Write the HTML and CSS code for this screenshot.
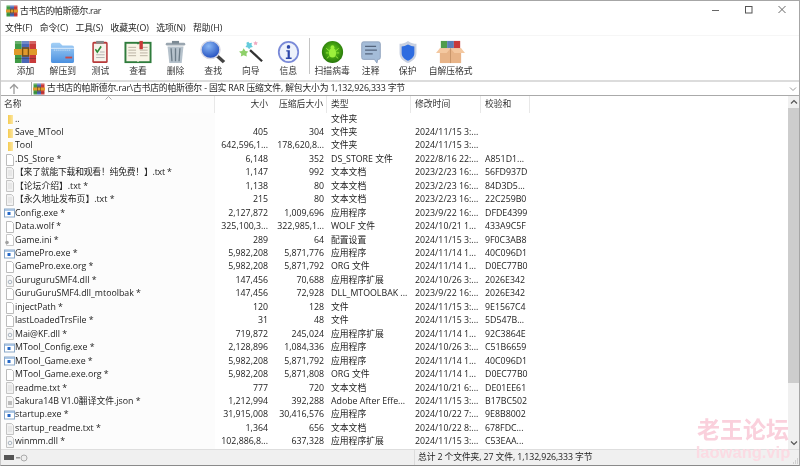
FILE: index.html
```html
<!DOCTYPE html>
<html lang="zh">
<head>
<meta charset="utf-8">
<title>古书店的帕斯德尔.rar</title>
<link rel="stylesheet" href="styles.css">
</head>
<body>
<svg class="defs" width="0" height="0" aria-hidden="true">
  <defs>
    <linearGradient id="fold" x1="0" x2="1" y1="0" y2="0"><stop offset="0" stop-color="#f5cb50"/><stop offset="1" stop-color="#fce6a0"/></linearGradient>
    <linearGradient id="blueg" x1="0" x2="0" y1="0" y2="1"><stop offset="0" stop-color="#a4d0f6"/><stop offset="1" stop-color="#4a90e0"/></linearGradient>
    <radialGradient id="lens" cx=".4" cy=".3" r=".8"><stop offset="0" stop-color="#8ab8f5"/><stop offset="1" stop-color="#1440b8"/></radialGradient>
    <radialGradient id="bug" cx=".5" cy=".45" r=".6"><stop offset="0" stop-color="#6ad81c"/><stop offset="1" stop-color="#1f6c08"/></radialGradient>
    <symbol id="rar" viewBox="0 0 24 24" preserveAspectRatio="none">
      <rect x="1" y="1" width="7" height="22" fill="#3f9a45"/><rect x="8" y="1" width="8" height="22" fill="#4a68b8"/><rect x="16" y="1" width="7" height="22" fill="#c83a3a"/>
      <rect x="1" y="1" width="22" height="3" fill="#fff" opacity=".22"/>
      <rect x="0" y="9" width="24" height="6" fill="#e09a2c"/><rect x="9" y="8" width="6" height="8" fill="none" stroke="#7a5210" stroke-width="1.4"/>
      <rect x="1" y="18" width="22" height="1" fill="#222" opacity=".3"/>
    </symbol>
    <symbol id="i-fold" viewBox="0 0 12 12"><rect x="5" y="2" width="5" height="9" fill="url(#fold)"/></symbol>
    <symbol id="i-doc" viewBox="0 0 12 12"><path d="M3.500.5h5l2 2v9h-7z" fill="#fff" stroke="#bcbcbc"/></symbol>
    <symbol id="i-txt" viewBox="0 0 12 12"><path d="M3.500.5h5l2 2v9h-7z" fill="#f2f2f2" stroke="#c4c4c4"/><path d="M5 4h4M5 6h4M5 8h4" stroke="#dcdcdc"/></symbol>
    <symbol id="i-exe" viewBox="0 0 12 12"><rect x="1.500" y="2" width="10" height="8" fill="#fff" stroke="#8aa8c8"/><rect x="2" y="2.500" width="9" height="1.200" fill="#88b0dc"/><rect x="4.500" y="5" width="3" height="3" fill="#2468c8"/></symbol>
    <symbol id="i-dll" viewBox="0 0 12 12"><path d="M3.500.5h5l2 2v9h-7z" fill="#f6f6f6" stroke="#c4c4c4"/><circle cx="7" cy="7" r="1.800" fill="none" stroke="#a8b4c0"/></symbol>
    <symbol id="i-ini" viewBox="0 0 12 12"><path d="M3.500.5h5l2 2v9h-7z" fill="#fff" stroke="#c8c8c8"/><circle cx="4" cy="8.500" r="1.800" fill="#a0a0a0"/></symbol>
    <symbol id="i-json" viewBox="0 0 12 12"><path d="M3.500.5h5l2 2v9h-7z" fill="#f6f6f6" stroke="#c8c8c8"/><path d="M5 6h4M5 8h4" stroke="#808080"/></symbol>
  </defs>
</svg>
<div class="window">
  <header class="titlebar">
    <svg class="title-icon"><use href="#rar"/></svg>
    <span class="title-text">古书店的帕斯德尔.rar</span>
    <div class="winbtns">
      <svg width="12" height="12" viewBox="0 0 12 12"><path d="M0 5.500h7" stroke="#666"/></svg>
      <svg width="12" height="12" viewBox="0 0 12 12"><rect x=".5" y="1.500" width="6.500" height="6.500" fill="none" stroke="#555"/></svg>
      <svg width="12" height="12" viewBox="0 0 12 12"><path d="M.5 1l7 7M7.500 1l-7 7" stroke="#666" fill="none"/></svg>
    </div>
  </header>
  <nav class="menubar">
    <span>文件(F)</span><span>命令(C)</span><span>工具(S)</span><span>收藏夹(O)</span><span>选项(N)</span><span>帮助(H)</span>
  </nav>
  <div class="toolbar">
    <div class="tool t1"><svg class="ticon"><use href="#rar"/></svg><span>添加</span></div>
    <div class="tool t2"><svg class="ticon" viewBox="0 0 26 26" preserveAspectRatio="none"><path d="M1 5a2 2 0 0 1 2-2h7l3 3h10a2 2 0 0 1 2 2v15a2 2 0 0 1-2 2H3a2 2 0 0 1-2-2z" fill="url(#blueg)"/><path d="M1 9h24" stroke="#e2f0fc"/><path d="M4 11h18" stroke="#dcebf8" stroke-dasharray="1 1"/><rect x="16" y="18" width="7" height="2" fill="#c84a4a"/></svg><span>解压到</span></div>
    <div class="tool t3"><svg class="ticon" viewBox="0 0 26 26" preserveAspectRatio="none"><rect x="3" y="2" width="20" height="23" rx="2" fill="#b83a3a"/><rect x="5" y="4" width="16" height="19" fill="#f6f2ea"/><rect x="8" y="1" width="10" height="3" fill="#888"/><path d="M7 10l2.500 3 5-6" stroke="#2c8a38" stroke-width="2" fill="none"/><path d="M13 13h6M8 16h11M8 19h11" stroke="#aaa"/></svg><span>测试</span></div>
    <div class="tool t4"><svg class="ticon" viewBox="0 0 29 26" preserveAspectRatio="none"><rect x=".5" y="2" width="28" height="23" fill="#2f7c3c"/><path d="M2.500 4h11l1 1 1-1h11v19h-11l-1 1-1-1h-11z" fill="#f8f4e6"/><path d="M4.500 8h8M4.500 11h8M4.500 14h8M4.500 17h8M16.500 8h8M16.500 11h8M16.500 14h8M16.500 17h8" stroke="#b8b0a0"/><rect x="16" y="1" width="3.500" height="9" fill="#c83a3a"/></svg><span>查看</span></div>
    <div class="tool t5"><svg class="ticon" viewBox="0 0 26 26" preserveAspectRatio="none"><rect x="2" y="3" width="22" height="3" rx="1.500" fill="#9aa6b0"/><rect x="9" y="1" width="8" height="3" fill="#7c8a94"/><path d="M4 7h18l-2 18H6z" fill="#b6c2cc"/><path d="M8 9l1 14M13 9v14M18 9l-1 14" stroke="#6c7c88" stroke-width="1.500"/></svg><span>删除</span></div>
    <div class="tool t6"><svg class="ticon" viewBox="0 0 26 26" preserveAspectRatio="none"><path d="M16 16l8 8" stroke="#444" stroke-width="3.500"/><circle cx="10.500" cy="10.500" r="9.500" fill="url(#lens)" stroke="#d8d8e4" stroke-width="1.500"/></svg><span>查找</span></div>
    <div class="tool t7"><svg class="ticon" viewBox="0 0 26 26" preserveAspectRatio="none"><path d="M12 11l13 12" stroke="#333" stroke-width="2.500"/><path d="M5 9l2 3 3 .5-2 2.500.5 3-3.500-1.500-3 1.500.5-3L0 12.500l3.500-.5z" fill="#8ed06a"/><path d="M10 2l1.500 1.500L14 3l-.5 2.500L15 7.500l-2.500.5L11 10l-1.500-2L7 7.500 8.500 5.500 8 3z" fill="#66ccdc"/><path d="M18 1l.8 1.500 1.700.3-1.200 1.200.3 1.700-1.600-.8-1.600.8.300-1.700-1.200-1.200 1.700-.3z" fill="#f0a8c0"/></svg><span>向导</span></div>
    <div class="tool t8"><svg class="ticon" viewBox="0 0 26 26" preserveAspectRatio="none"><circle cx="13" cy="13" r="11" fill="#eef2fb" stroke="#7a8ad8" stroke-width="2"/><circle cx="13" cy="7.500" r="2" fill="#2c46a8"/><path d="M10.500 11h4v8h2v1.500h-6.500V19h2v-6.500h-1.500z" fill="#2c46a8"/></svg><span>信息</span></div>
    <div class="tsep"></div>
    <div class="tool t9"><svg class="ticon" viewBox="0 0 26 26" preserveAspectRatio="none"><circle cx="13" cy="13" r="12" fill="url(#bug)"/><ellipse cx="13" cy="14" rx="4" ry="5" fill="#9cf03c"/><circle cx="13" cy="8" r="2.200" fill="#9cf03c"/><path d="M6 9l3 2.500M20 9l-3 2.500M5.500 14h3M20.500 14h-3M6.500 20l3-2.500M19.500 20l-3-2.500" stroke="#9cf03c"/></svg><span>扫描病毒</span></div>
    <div class="tool t10"><svg class="ticon" viewBox="0 0 26 26" preserveAspectRatio="none"><path d="M2 4a2 2 0 0 1 2-2h18a2 2 0 0 1 2 2v15a2 2 0 0 1-2 2h-1l-1 4-3-4H4a2 2 0 0 1-2-2z" fill="#a4bcd8" stroke="#8ca0bc"/><path d="M6 7h13M6 11h14M6 15h9" stroke="#54647c" stroke-width="1.300"/></svg><span>注释</span></div>
    <div class="tool t11"><svg class="ticon" viewBox="0 0 26 26" preserveAspectRatio="none"><path d="M13 1c4 2.500 7 3 10 3v10c0 6-5 9-10 11C8 23 3 20 3 14V4c3 0 6-.5 10-3z" fill="#c8d0e0"/><path d="M13 5c3 1.500 5 2 7.500 2v7c0 4.500-3.500 6.500-7.500 8.500C9 20.500 5.500 18.500 5.500 14V7C8 7 10 6.500 13 5z" fill="#2e6ce0"/></svg><span>保护</span></div>
    <div class="tool t12"><svg class="ticon" viewBox="0 0 30 26" preserveAspectRatio="none"><rect x="5" y="1" width="6.500" height="8" fill="#4f9c4a"/><rect x="11.500" y="1" width="7" height="8" fill="#5a80b8"/><rect x="18.500" y="1" width="6.500" height="8" fill="#c83a3a"/><path d="M4 9h22v16H4z" fill="#e8b488"/><path d="M4 9L0 14h11l4-5zM26 9l4 5H19l-4-5z" fill="#f4c8a0"/><path d="M15 9v16" stroke="#c89468"/></svg><span>自解压格式</span></div>
  </div>
  <div class="addressrow">
    <svg class="up" width="12" height="12" viewBox="0 0 12 12"><path d="M6 11V2M2 5.500L6 1.500l4 4" stroke="#9a9a9a" stroke-width="1.300" fill="none"/></svg>
    <div class="address">
      <svg class="addr-icon"><use href="#rar"/></svg>
      <span class="addr-text">古书店的帕斯德尔.rar\古书店的帕斯德尔 - 固实 RAR 压缩文件, 解包大小为 1,132,926,333 字节</span>
      <svg class="chev" width="8" height="6" viewBox="0 0 8 6"><path d="M1 1.500l3 3 3-3" stroke="#9a9a9a" fill="none"/></svg>
    </div>
  </div>
  <div class="listarea">
    <div class="list">
      <div class="row head">
        <div class="c name">名称<svg class="sort" width="7" height="4" viewBox="0 0 7 4"><path d="M.5 3.500l3-3 3 3" stroke="#aaa" fill="none"/></svg></div>
        <div class="c size">大小</div>
        <div class="c pack">压缩后大小</div>
        <div class="c type">类型</div>
        <div class="c time">修改时间</div>
        <div class="c crc">校验和</div>
      </div>
      <div class="row"><div class="c name"><svg class="fi"><use href="#i-fold"/></svg>..</div><div class="c size"></div><div class="c pack"></div><div class="c type">文件夹</div><div class="c time"></div><div class="c crc"></div></div>
      <div class="row"><div class="c name"><svg class="fi"><use href="#i-fold"/></svg>Save_MTool</div><div class="c size">405</div><div class="c pack">304</div><div class="c type">文件夹</div><div class="c time">2024/11/15 3:...</div><div class="c crc"></div></div>
      <div class="row"><div class="c name"><svg class="fi"><use href="#i-fold"/></svg>Tool</div><div class="c size">642,596,1...</div><div class="c pack">178,620,8...</div><div class="c type">文件夹</div><div class="c time">2024/11/15 3:...</div><div class="c crc"></div></div>
      <div class="row"><div class="c name"><svg class="fi"><use href="#i-doc"/></svg>.DS_Store *</div><div class="c size">6,148</div><div class="c pack">352</div><div class="c type">DS_STORE 文件</div><div class="c time">2022/8/16 22:...</div><div class="c crc">A851D1...</div></div>
      <div class="row"><div class="c name"><svg class="fi"><use href="#i-txt"/></svg><span class="tight">【来了就能下载和观看！纯免费！】.txt *</span></div><div class="c size">1,147</div><div class="c pack">992</div><div class="c type">文本文档</div><div class="c time">2023/2/23 16:...</div><div class="c crc">56FD937D</div></div>
      <div class="row"><div class="c name"><svg class="fi"><use href="#i-txt"/></svg>【论坛介绍】.txt *</div><div class="c size">1,138</div><div class="c pack">80</div><div class="c type">文本文档</div><div class="c time">2023/2/23 16:...</div><div class="c crc">84D3D5...</div></div>
      <div class="row"><div class="c name"><svg class="fi"><use href="#i-txt"/></svg>【永久地址发布页】.txt *</div><div class="c size">215</div><div class="c pack">80</div><div class="c type">文本文档</div><div class="c time">2023/2/23 16:...</div><div class="c crc">22C259B0</div></div>
      <div class="row"><div class="c name"><svg class="fi"><use href="#i-exe"/></svg>Config.exe *</div><div class="c size">2,127,872</div><div class="c pack">1,009,696</div><div class="c type">应用程序</div><div class="c time">2023/9/22 16:...</div><div class="c crc">DFDE4399</div></div>
      <div class="row"><div class="c name"><svg class="fi"><use href="#i-doc"/></svg>Data.wolf *</div><div class="c size">325,100,3...</div><div class="c pack">322,985,1...</div><div class="c type">WOLF 文件</div><div class="c time">2024/10/21 1...</div><div class="c crc">433A9C5F</div></div>
      <div class="row"><div class="c name"><svg class="fi"><use href="#i-ini"/></svg>Game.ini *</div><div class="c size">289</div><div class="c pack">64</div><div class="c type">配置设置</div><div class="c time">2024/11/15 3:...</div><div class="c crc">9F0C3AB8</div></div>
      <div class="row"><div class="c name"><svg class="fi"><use href="#i-exe"/></svg>GamePro.exe *</div><div class="c size">5,982,208</div><div class="c pack">5,871,776</div><div class="c type">应用程序</div><div class="c time">2024/11/14 1...</div><div class="c crc">40C096D1</div></div>
      <div class="row"><div class="c name"><svg class="fi"><use href="#i-doc"/></svg>GamePro.exe.org *</div><div class="c size">5,982,208</div><div class="c pack">5,871,792</div><div class="c type">ORG 文件</div><div class="c time">2024/11/14 1...</div><div class="c crc">D0EC77B0</div></div>
      <div class="row"><div class="c name"><svg class="fi"><use href="#i-dll"/></svg>GuruguruSMF4.dll *</div><div class="c size">147,456</div><div class="c pack">70,688</div><div class="c type">应用程序扩展</div><div class="c time">2024/10/26 3:...</div><div class="c crc">2026E342</div></div>
      <div class="row"><div class="c name"><svg class="fi"><use href="#i-doc"/></svg>GuruGuruSMF4.dll_mtoolbak *</div><div class="c size">147,456</div><div class="c pack">72,928</div><div class="c type">DLL_MTOOLBAK ...</div><div class="c time">2023/9/22 16:...</div><div class="c crc">2026E342</div></div>
      <div class="row"><div class="c name"><svg class="fi"><use href="#i-doc"/></svg>injectPath *</div><div class="c size">120</div><div class="c pack">128</div><div class="c type">文件</div><div class="c time">2024/11/15 3:...</div><div class="c crc">9E1567C4</div></div>
      <div class="row"><div class="c name"><svg class="fi"><use href="#i-doc"/></svg>lastLoadedTrsFile *</div><div class="c size">31</div><div class="c pack">48</div><div class="c type">文件</div><div class="c time">2024/11/15 3:...</div><div class="c crc">5D547B...</div></div>
      <div class="row"><div class="c name"><svg class="fi"><use href="#i-dll"/></svg>Mai@KF.dll *</div><div class="c size">719,872</div><div class="c pack">245,024</div><div class="c type">应用程序扩展</div><div class="c time">2024/11/14 1...</div><div class="c crc">92C3864E</div></div>
      <div class="row"><div class="c name"><svg class="fi"><use href="#i-exe"/></svg>MTool_Config.exe *</div><div class="c size">2,128,896</div><div class="c pack">1,084,336</div><div class="c type">应用程序</div><div class="c time">2024/10/26 3:...</div><div class="c crc">C51B6659</div></div>
      <div class="row"><div class="c name"><svg class="fi"><use href="#i-exe"/></svg>MTool_Game.exe *</div><div class="c size">5,982,208</div><div class="c pack">5,871,792</div><div class="c type">应用程序</div><div class="c time">2024/11/14 1...</div><div class="c crc">40C096D1</div></div>
      <div class="row"><div class="c name"><svg class="fi"><use href="#i-doc"/></svg>MTool_Game.exe.org *</div><div class="c size">5,982,208</div><div class="c pack">5,871,808</div><div class="c type">ORG 文件</div><div class="c time">2024/11/14 1...</div><div class="c crc">D0EC77B0</div></div>
      <div class="row"><div class="c name"><svg class="fi"><use href="#i-txt"/></svg>readme.txt *</div><div class="c size">777</div><div class="c pack">720</div><div class="c type">文本文档</div><div class="c time">2024/10/21 6:...</div><div class="c crc">DE01EE61</div></div>
      <div class="row"><div class="c name"><svg class="fi"><use href="#i-json"/></svg>Sakura14B V1.0翻译文件.json *</div><div class="c size">1,212,994</div><div class="c pack">392,288</div><div class="c type">Adobe After Effe...</div><div class="c time">2024/11/15 3:...</div><div class="c crc">B17BC502</div></div>
      <div class="row"><div class="c name"><svg class="fi"><use href="#i-exe"/></svg>startup.exe *</div><div class="c size">31,915,008</div><div class="c pack">30,416,576</div><div class="c type">应用程序</div><div class="c time">2024/10/22 7:...</div><div class="c crc">9E8B8002</div></div>
      <div class="row"><div class="c name"><svg class="fi"><use href="#i-txt"/></svg>startup_readme.txt *</div><div class="c size">1,364</div><div class="c pack">656</div><div class="c type">文本文档</div><div class="c time">2024/10/22 8:...</div><div class="c crc">678FDC...</div></div>
      <div class="row"><div class="c name"><svg class="fi"><use href="#i-dll"/></svg>winmm.dll *</div><div class="c size">102,886,8...</div><div class="c pack">637,328</div><div class="c type">应用程序扩展</div><div class="c time">2024/11/15 3:...</div><div class="c crc">C53EAA...</div></div>
    </div>
    <div class="scrollbar">
      <svg class="sb-arrow" width="8" height="6" viewBox="0 0 8 6"><path d="M1 4.500l3-3 3 3" stroke="#555" stroke-width="1.200" fill="none"/></svg>
      <div class="sb-thumb"></div>
      <div class="sb-track"></div>
      <svg class="sb-arrow" width="8" height="6" viewBox="0 0 8 6"><path d="M1 1.500l3 3 3-3" stroke="#555" stroke-width="1.200" fill="none"/></svg>
    </div>
  </div>
  <footer class="statusbar">
    <div class="st-icons">
      <svg width="26" height="10" viewBox="0 0 26 10"><rect x="0" y="2" width="10" height="5" fill="#555"/><rect x="12" y="4" width="4" height="1.500" fill="#999"/><circle cx="20" cy="5" r="3" fill="#eee" stroke="#aaa"/></svg>
    </div>
    <div class="st-text">总计 2 个文件夹, 27 文件, 1,132,926,333 字节</div>
    <svg class="grip" width="6" height="6" viewBox="0 0 6 6"><path d="M4 1h1M2 3h1M4 3h1M0 5h1M2 5h1M4 5h1" stroke="#b0b0b0"/></svg>
  </footer>
  <div class="watermark"><div class="wm1">老王论坛</div><div class="wm2">laowang.vip</div></div>
</div>
</body>
</html>
```
FILE: styles.css
```css
* { box-sizing: border-box; }
html, body { margin: 0; padding: 0; background: #fff; }
body { font-family: "Open Sans", "Noto Sans CJK SC", sans-serif; font-size: 8.800px; color: #222; overflow: hidden; }
.defs { position: absolute; }
.window { position: relative; width: 800px; height: 466px; display: flex; flex-direction: column; border-top: 1px solid #a6a6a6; border-right: 1px solid #a6a6a6; border-bottom: 1px solid #8a8a8a; border-left: 1px solid #c8c8c8; overflow: hidden; filter: blur(.35px); }
.titlebar { height: 19px; display: flex; align-items: center; padding-left: 5px; flex: none; }
.title-icon { width: 12px; height: 12px; margin-right: 2px; }
.title-text { color: #222; letter-spacing: -.3px; }
.winbtns { margin-left: auto; display: flex; gap: 21px; padding-right: 9px; }
.menubar { height: 15px; display: flex; align-items: flex-end; padding-left: 4px; gap: 7.400px; flex: none; line-height: 13px; }
.toolbar { height: 45px; flex: none; display: flex; align-items: flex-start; padding-top: 4px; border-top: 1px solid #f6f6f6; }
.tool { display: flex; flex-direction: column; align-items: center; flex: none; height: 40px; }
.tool span { line-height: 12px; margin-top: 1px; white-space: nowrap; color: #333; }
.ticon { height: 24px; display: block; }
.t1 { width: 37px; margin-left: 6px; }
.t2, .t3, .t4, .t5, .t6, .t7, .t8 { width: 37.600px; }
.t1 .ticon { width: 23px; }
.t2 .ticon { width: 25px; }
.t3 .ticon { width: 20px; }
.t4 .ticon { width: 28px; }
.t5 .ticon { width: 23px; }
.t6 .ticon { width: 26px; }
.t7 .ticon { width: 24px; }
.t8 .ticon { width: 23px; }
.t9 .ticon { width: 23px; }
.t10 .ticon { width: 22px; }
.t11 .ticon { width: 22px; }
.t12 .ticon { width: 29px; }
.tsep { width: 1px; height: 36px; background: #c4c4c4; flex: none; margin-left: 1.500px; margin-top: -2px; }
.t9 { width: 45px; }
.t10 { width: 32px; }
.t11 { width: 42px; }
.t12 { width: 44px; }
.addressrow { height: 16px; flex: none; display: flex; border-top: 2px solid #dcdcdc; border-bottom: 1px solid #aaa; align-items: center; }
.up { margin: 0 11px 0 7px; flex: none; }
.address { flex: 1; height: 100%; border-left: 1px solid #aaa; display: flex; align-items: center; padding-left: 1px; gap: 2px; }
.addr-icon { width: 12px; height: 12px; flex: none; }
.addr-text { line-height: 13px; white-space: nowrap; letter-spacing: -.16px; }
.chev { margin-left: auto; margin-right: 2px; }
.listarea { flex: 1; display: flex; min-height: 0; }
.list { flex: 1; min-width: 0; background: #fff; }
.row { display: grid; grid-template-columns: 214px 53px 59px 84px 70px 1fr; height: 13.460px; line-height: 13.460px; white-space: nowrap; }
.row.head { height: 16.500px; line-height: 17px; color: #333; }
.head .c { position: relative; border-right: 1px solid #e8e8e8; }
.head .name { padding-left: 3px; background: #fdfdfd; }
.head .size { border-right: none; }
.head .crc { width: 49px; }
.sort { position: absolute; left: 104px; top: 0; }
.c { overflow: hidden; }
.name { display: flex; align-items: center; padding-left: 2px; background: #fcfcfc; }
.tight { letter-spacing: -.2px; }
.size, .pack { text-align: right; }
.pack { padding-right: 3px; }
.type, .time, .crc { padding-left: 4px; }
.fi { width: 12px; height: 12px; flex: none; }
.scrollbar { width: 11px; flex: none; display: flex; flex-direction: column; background: #f0f0f0; align-items: center; }
.sb-arrow { flex: none; margin: 3px 0; }
.sb-thumb { height: 275px; width: 100%; background: #cdcdcd; flex: none; }
.sb-track { flex: 1; }
.statusbar { height: 16px; flex: none; background: #f0f0f0; border-top: 1px solid #dedede; display: flex; align-items: center; padding-left: 3px; }
.st-icons { width: 410px; flex: none; display: flex; align-items: center; }
.st-text { border-left: 1px solid #dcdcdc; padding-left: 3px; line-height: 15px; letter-spacing: -.12px; }
.grip { margin-left: auto; align-self: flex-end; margin-bottom: 1px; }
.watermark { position: absolute; right: 8px; bottom: 4px; width: 96px; text-align: center; pointer-events: none; }
.wm1 { font-size: 23px; font-weight: 700; line-height: 24px; margin-bottom: 3px; color: #fad0dc; }
.wm2 { font-family: "Liberation Sans", sans-serif; font-size: 16.500px; font-weight: 700; line-height: 17px; color: #fbdbe3; }
```
